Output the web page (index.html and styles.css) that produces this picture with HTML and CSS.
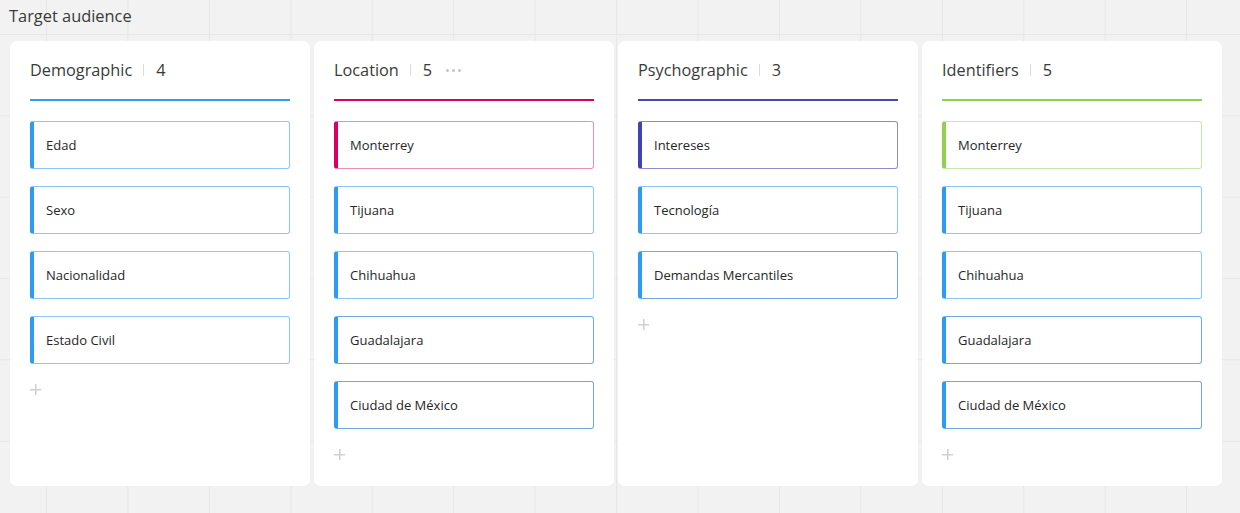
FILE: index.html
```html
<!DOCTYPE html>
<html>
<head>
<meta charset="utf-8">
<link rel="stylesheet" href="styles.css">
</head>
<body>
<div class="page">
  <div class="title">Target audience</div>
  <div class="board">
    <div class="column">
      <div class="header blue-line">
        <span class="name">Demographic</span><span class="sep"></span><span class="count">4</span>
      </div>
      <div class="cards">
        <div class="card blue">Edad</div>
        <div class="card blue">Sexo</div>
        <div class="card blue">Nacionalidad</div>
        <div class="card blue">Estado Civil</div>
      </div>
      <div class="add"></div>
    </div>
    <div class="column">
      <div class="header pink-line">
        <span class="name">Location</span><span class="sep"></span><span class="count">5</span><span class="dots"><i></i><i></i><i></i></span>
      </div>
      <div class="cards">
        <div class="card pink">Monterrey</div>
        <div class="card blue">Tijuana</div>
        <div class="card blue">Chihuahua</div>
        <div class="card blue dark">Guadalajara</div>
        <div class="card blue dark">Ciudad de México</div>
      </div>
      <div class="add"></div>
    </div>
    <div class="column">
      <div class="header purple-line">
        <span class="name">Psychographic</span><span class="sep"></span><span class="count">3</span>
      </div>
      <div class="cards">
        <div class="card purple">Intereses</div>
        <div class="card blue">Tecnología</div>
        <div class="card blue dark">Demandas Mercantiles</div>
      </div>
      <div class="add"></div>
    </div>
    <div class="column">
      <div class="header green-line">
        <span class="name">Identifiers</span><span class="sep"></span><span class="count">5</span>
      </div>
      <div class="cards">
        <div class="card green">Monterrey</div>
        <div class="card blue">Tijuana</div>
        <div class="card blue">Chihuahua</div>
        <div class="card blue dark">Guadalajara</div>
        <div class="card blue dark">Ciudad de México</div>
      </div>
      <div class="add"></div>
    </div>
  </div>
</div>
</body>
</html>
```
FILE: styles.css
```css
html, body {
  margin: 0;
  padding: 0;
}
body {
  width: 1240px;
  height: 513px;
  overflow: hidden;
  font-family: "Open Sans", "Liberation Sans", sans-serif;
  color: #333;
  background-color: #f2f2f2;
  background-image:
    linear-gradient(to right, #e6e6e6 1px, transparent 1px),
    linear-gradient(to bottom, #e6e6e6 1px, transparent 1px);
  background-size: 81.45px 81.35px;
  background-position: 46px 34px;
}
.page {
  padding: 5px 0 0 10px;
}
.title {
  font-size: 16.4px;
  line-height: 22px;
  height: 22px;
  margin-left: -1px;
  color: #3a3a3a;
}
.board {
  display: flex;
  gap: 4px;
  margin-top: 14px;
}
.column {
  width: 300px;
  height: 445px;
  box-sizing: border-box;
  background: #fff;
  border-radius: 7px;
  padding: 18px 20px 0 20px;
}
.header {
  display: flex;
  align-items: center;
  height: 22px;
  padding-bottom: 18px;
  border-bottom: 2px solid #2d9bf0;
  font-size: 16.3px;
  line-height: 22px;
  color: #3a3a3a;
}
.blue-line { border-bottom-color: #2d9bf0; }
.pink-line { border-bottom-color: #da0063; }
.purple-line { border-bottom-color: #4b47ad; }
.green-line { border-bottom-color: #8fd14f; }
.sep {
  width: 1px;
  height: 12px;
  background: #dcdcdc;
  margin: 0 12px 0 11px;
}
.dots {
  display: flex;
  gap: 3px;
  margin-left: 14px;
}
.dots i {
  width: 3px;
  height: 3px;
  border-radius: 50%;
  background: #c4c4c4;
}
.cards {
  display: flex;
  flex-direction: column;
  gap: 17px;
  margin-top: 20px;
}
.card {
  height: 48px;
  box-sizing: border-box;
  display: flex;
  align-items: center;
  padding-left: 12px;
  border: 1px solid #8cc6f6;
  border-left: 4px solid #2d9bf0;
  border-radius: 3px;
  font-size: 13px;
  color: #262626;
}
.card.dark { border-color: #6ea9e0; border-left-color: #2d9bf0; }
.card.pink { border-color: #ee8db5; border-left-color: #da0063; }
.card.purple { border-color: #8e8cc6; border-left-color: #4144b0; }
.card.green { border-color: #c8e8a8; border-left-color: #8fd14f; }
.add {
  width: 11px;
  height: 11px;
  margin-top: 20px;
  margin-left: 0;
  background:
    linear-gradient(#d0d0d0, #d0d0d0) center / 11px 1.5px no-repeat,
    linear-gradient(#d0d0d0, #d0d0d0) center / 1.5px 11px no-repeat;
}
```
